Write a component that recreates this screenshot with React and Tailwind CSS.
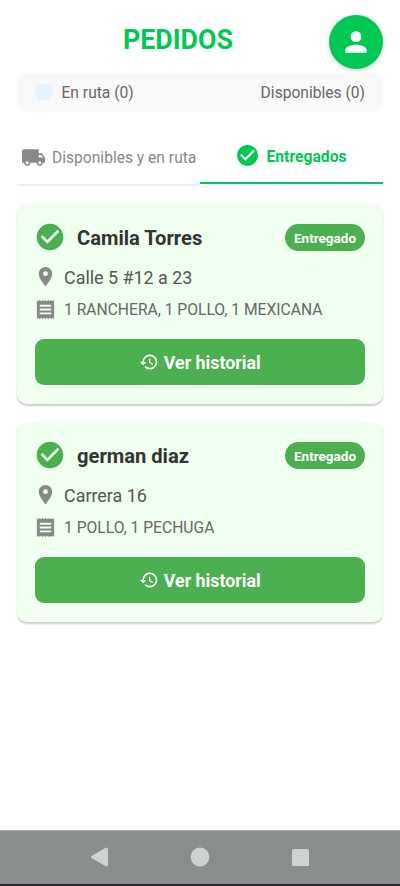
import {
  MdCheckCircle,
  MdHistory,
  MdLocalShipping,
  MdPerson,
  MdPlace,
  MdReceipt,
} from 'react-icons/md';

const orders = [
  {
    id: 1,
    customer: 'Camila Torres',
    address: 'Calle 5 #12 a 23',
    items: '1 RANCHERA, 1 POLLO, 1 MEXICANA',
  },
  {
    id: 2,
    customer: 'german diaz',
    address: 'Carrera 16',
    items: '1 POLLO, 1 PECHUGA',
  },
];

function OrderCard({ order }) {
  return (
    <article className="h-[200px] rounded-[10px] bg-[#f0fff0] px-[18px] pt-5 shadow-[0_1.5px_2px_rgba(0,0,0,0.2)]">
      <div className="flex h-[28px] items-center">
        <MdCheckCircle className="-mt-px -ml-px size-[32px] shrink-0 text-[#4caf50]" />
        <h2 className="ml-[11px] flex-1 pt-px text-[20.15px] leading-[28px] font-bold text-[#333333]">
          {order.customer}
        </h2>
        <span className="flex h-[27px] w-[80px] items-center justify-center rounded-full bg-[#4caf50] pt-[2px] text-[13.5px] font-bold text-white">
          Entregado
        </span>
      </div>

      <div className="mt-[13px] flex h-6 items-center">
        <MdPlace className="-mt-px -ml-px size-[23px] shrink-0 text-[#888888]" />
        <p className="ml-[7px] pt-[2px] text-[17.9px] leading-6 text-[#555555]">{order.address}</p>
      </div>

      <div className="mt-2 flex h-6 items-center">
        <MdReceipt className="mt-px -ml-px size-[23px] shrink-0 text-[#888888]" />
        <p className="ml-[7px] pt-[2px] text-[15.65px] leading-6 text-[#666666]">{order.items}</p>
      </div>

      <button className="mt-[18px] flex h-[46.5px] w-full items-center justify-center rounded-[9px] bg-[#4caf50] text-white">
        <MdHistory className="size-[20px]" />
        <span className="ml-[4.5px] pt-[2px] text-[17.8px] leading-6 font-bold">Ver historial</span>
      </button>
    </article>
  );
}

export default function App() {
  return (
    <div className="flex h-[886px] w-[400px] flex-col overflow-hidden bg-white font-[Roboto,sans-serif]">
      <main className="relative flex-1 px-[17px]">
        <header className="flex h-[73px] items-start pt-[23px] pl-[106px]">
          <h1 className="text-[26.8px] leading-[34px] font-bold text-[#00c853]">PEDIDOS</h1>
        </header>

        {/* Perfil */}
        <button className="absolute top-[15.3px] right-[17px] flex size-[54px] items-center justify-center rounded-full bg-[#00c853] text-white shadow-[0_1px_5px_rgba(0,0,0,0.2)]">
          <MdPerson className="size-[32px]" />
        </button>

        {/* Resumen */}
        <section className="flex h-[39px] items-center rounded-[9px] bg-[#f9f9f9] px-[18px] text-[15.6px] text-[#666666]">
          <span className="-mt-px size-[18px] rounded-full bg-[#e3f4ff]" />
          <span className="ml-[8.5px] flex-1 pt-[3px]">En ruta (0)</span>
          <span className="pt-[3px]">Disponibles (0)</span>
        </section>

        <nav className="mt-[20px] flex h-[53.5px]">
          <button className="flex w-[183px] items-center border-b-2 border-[#eeeeee] pl-[4px] text-[#888888]">
            <MdLocalShipping className="-ml-[0.5px] size-[25px] shrink-0" />
            <span className="ml-[6.5px] pt-[2px] text-[15.6px] whitespace-nowrap">
              Disponibles y en ruta
            </span>
          </button>
          <button className="flex h-[52.3px] w-[183px] items-center border-b-[2.5px] border-[#00c853] pl-[35.5px] text-[#00c853]">
            <MdCheckCircle className="-mt-[3px] -ml-[0.5px] size-[25px] shrink-0" />
            <span className="ml-[6.5px] text-[15.7px] font-bold">Entregados</span>
          </button>
        </nav>

        <div className="mt-[18px] flex flex-col gap-[18px]">
          {orders.map((order) => (
            <OrderCard key={order.id} order={order} />
          ))}
        </div>
      </main>

      {/* Barra del sistema */}
      <footer className="flex h-[56px] items-center justify-center border-t border-b-2 border-t-[#a0a6a5] border-b-[#2a2329] bg-[#878e8d]">
        <svg viewBox="0 0 310 54" className="h-[54px] w-[310px]" fill="#d0d1d3">
          <path d="M47.5 26 61.5 18V34Z" stroke="#d0d1d3" strokeWidth="3" strokeLinejoin="round" />
          <circle cx="155" cy="26" r="9.4" />
          <rect x="247" y="18" width="17" height="17" rx="1.5" />
        </svg>
      </footer>
    </div>
  );
}
